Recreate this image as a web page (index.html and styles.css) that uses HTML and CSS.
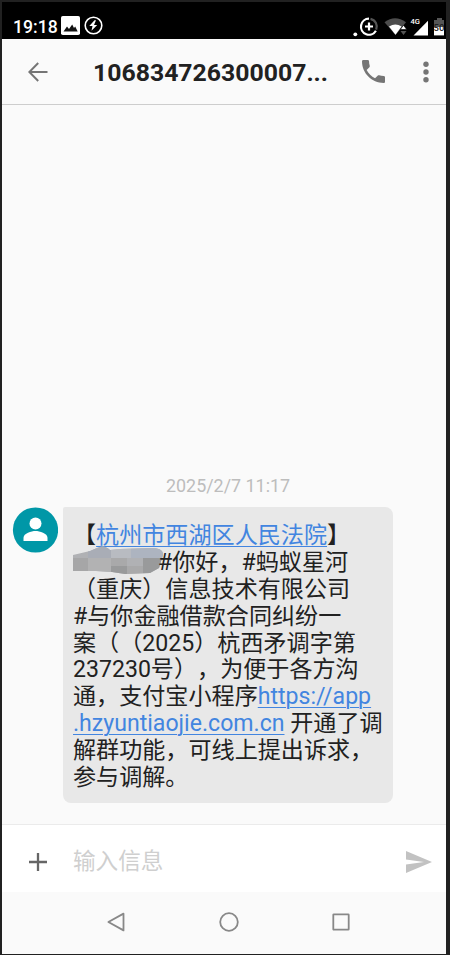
FILE: index.html
```html
<!DOCTYPE html>
<html lang="zh-CN">
<head>
<meta charset="utf-8">
<title>信息</title>
<link rel="stylesheet" href="styles.css">
</head>
<body>
<main class="phone">
  <div class="status">
    <span class="clock">19:18</span>
    <svg class="picture" width="19" height="19" viewBox="0 0 19 19"><rect width="19" height="19" rx="1.8" fill="#fff"/><path d="M2.5 15.5 6 10.5l2 2.5 3.2-4.5L13 12l1.2-1.5 2.5 5z" fill="#111"/></svg>
    <svg class="bolt" width="19" height="19" viewBox="0 0 19 19"><circle cx="9.5" cy="9.5" r="8.3" fill="none" stroke="#fff" stroke-width="1.6"/><path d="M10.5 4.2 5.3 10h3.2l-1 4.7L13.2 9H10l2-4.8z" fill="#fff"/></svg>
    <svg class="signals" width="91" height="22" viewBox="0 0 91 22">
      <circle cx="2.3" cy="18.3" r="1.9" fill="#fff"/>
      <path d="M16 2.7A8 8 0 1 0 22.9 14.7" fill="none" stroke="#fff" stroke-width="2.2"/>
      <path d="M17.5 2.8A8 8 0 0 1 23.2 13.7" fill="none" stroke="#555" stroke-width="2.2"/>
      <path d="M16 6.5v8M12 10.5h8" stroke="#fff" stroke-width="2.2"/>
      <path d="M31.5 6.3Q42 -1.8 53 6.3L42.5 19z" fill="#4c4c4c"/>
      <path d="M36 10.5Q42.5 6.5 48.5 10.5L42.5 18.8z" fill="#fff"/>
      <path d="m47.3 13.5 3.2-4.3 3.2 4.3z" fill="#fff" stroke="#000" stroke-width=".6"/><path d="m47.5 15 3 4 3-4z" fill="#555"/>
      <text x="57.5" y="7.5" class="network">4G</text>
      <path d="M60.5 19.4 75 4.8v14.6z" fill="#fff"/>
      <path d="M81 4h3V2h5v2h2v7.5H81z" fill="#555"/><path d="M81 11h10v8.4H81z" fill="#fff"/>
      <text x="80.5" y="14.8" class="charge">50</text>
    </svg>
  </div>
  <header class="header">
    <svg class="back" width="20" height="20" viewBox="0 0 20 20"><path d="M19.5 10H1.5M10.2 1 1.3 10l8.9 9" fill="none" stroke="#757575" stroke-width="2"/></svg>
    <h1 class="title">106834726300007...</h1>
    <svg class="call" width="23" height="23" viewBox="3 3 18 18"><path d="M6.62 10.79c1.44 2.83 3.76 5.14 6.59 6.59l2.2-2.2c.27-.27.67-.36 1.02-.24 1.12.37 2.33.57 3.57.57.55 0 1 .45 1 1V20c0 .55-.45 1-1 1-9.39 0-17-7.61-17-17 0-.55.45-1 1-1h3.5c.55 0 1 .45 1 1 0 1.25.2 2.45.57 3.57.11.35.03.74-.25 1.02z" fill="#757575"/></svg>
    <svg class="more" width="6" height="22" viewBox="0 0 6 22"><g fill="#757575"><circle cx="3" cy="3.3" r="2.7"/><circle cx="3" cy="11" r="2.7"/><circle cx="3" cy="18.7" r="2.7"/></g></svg>
  </header>
  <section class="thread">
    <time class="date">2025/2/7 11:17</time>
    <div class="message">
      <svg class="avatar" width="46" height="46" viewBox="0 0 46 46"><circle cx="23.5" cy="23" r="22.6" fill="#0097a7"/><circle cx="23.5" cy="16.4" r="6" fill="#fff"/><path d="M11.5 34v-3.2c0-4.5 8-6.8 12-6.8s12 2.3 12 6.8V34z" fill="#fff"/></svg>
      <div class="bubble">
        <p>【<a>杭州市西湖区人民法院</a>】</p>
        <p><svg class="redaction" width="90" height="28" viewBox="0 0 90 28">
          <clipPath id="smudge"><path d="M0 9 17 5 24 2Q31-2 37 4l10-1 31-1q13 0 12 7l-4 13-9 5-25 1-13-2-16-1H0z"/></clipPath>
          <g clip-path="url(#smudge)"><path fill="#b0b1b4" d="M0 0h90v28H0z"/><path fill="#a9adb6" d="M15 0h23v12H15z"/><path fill="#b8bbc1" d="M38 0h20v12H38z"/><path fill="#adb4c0" d="M58 0h32v12H58z"/><path fill="#a6a6a7" d="M0 12h15v16H0z"/><path fill="#b2b2b3" d="M15 12h23v16H15z"/><path fill="#a9a9aa" d="M38 12h16v8H38zM54 20h16v8H54z"/><path fill="#999a9b" d="M70 12h20v16H70zM38 20h16v8H38z"/></g>
        </svg>#你好，#蚂蚁星河</p>
        <p>（重庆）信息技术有限公司</p>
        <p>#与你金融借款合同纠纷一</p>
        <p>案（（2025）杭西矛调字第</p>
        <p>237230号），为便于各方沟</p>
        <p>通，支付宝小程序<a>https://app</a></p>
        <p><a>.hzyuntiaojie.com.cn</a> 开通了调</p>
        <p>解群功能，可线上提出诉求，</p>
        <p>参与调解。</p>
      </div>
    </div>
  </section>
  <div class="compose">
    <svg class="plus" width="18" height="18" viewBox="0 0 18 18"><path d="M9 0v18M0 9h18" stroke="#666" stroke-width="2.3"/></svg>
    <span class="hint">输入信息</span>
    <svg class="send" width="26" height="22" viewBox="0 0 26 22"><path d="M0 0 26 11 0 22v-8.4L18 11 0 8.4z" fill="#c2c2c2"/></svg>
  </div>
  <nav class="nav">
    <svg width="20" height="20" viewBox="0 0 20 20"><path d="M17.5 1.6v16.8L2.4 10z"/></svg>
    <svg width="20" height="20" viewBox="0 0 20 20"><circle cx="10" cy="10" r="8.8"/></svg>
    <svg width="20" height="20" viewBox="0 0 20 20"><rect x="2.3" y="2.3" width="15.4" height="15.4" rx=".5"/></svg>
  </nav>
</main>
</body>
</html>
```
FILE: styles.css
```css
* { box-sizing: border-box; }
body {
  margin: 0;
  padding: 2px 4px 1px 2px;
  height: 955px;
  background: #212121;
  font-family: Roboto, "Noto Sans CJK SC", sans-serif;
  color: #212121;
  overflow: hidden;
}
svg { display: block; flex: none; }
.phone {
  width: 444px;
  height: 952px;
  background: #fafafa;
  display: flex;
  flex-direction: column;
}
.status {
  height: 37px;
  flex: none;
  background: #000;
  color: #fff;
  display: flex;
  align-items: flex-start;
  padding: 14px 2px 0 11px;
}
.clock {
  width: 48px;
  font-size: 17.6px;
  font-weight: 500;
  line-height: 22px;
  white-space: nowrap;
}
.bolt { margin-left: 4px; }
.signals { margin-left: auto; }
.network { font-size: 7.5px; font-weight: 500; fill: #fff; }
.charge { font-size: 9.5px; font-weight: 500; fill: #222; }
.header {
  height: 66px;
  flex: none;
  border-bottom: 1px solid #cdcdcd;
  display: flex;
  align-items: center;
  padding: 0 17px 0 26px;
}
.title {
  margin: 2px 0 0 45px;
  width: 269px;
  font-size: 24.8px;
  line-height: 30px;
  font-weight: 700;
  white-space: nowrap;
}
.more { margin-left: auto; }
.thread {
  flex: 1;
  display: flex;
  flex-direction: column;
  justify-content: flex-end;
  padding: 0 53px 21px 10px;
}
.date {
  margin-left: 154px;
  font-size: 17.9px;
  line-height: 22px;
  margin-bottom: 10px;
  color: #bdbdbd;
  white-space: nowrap;
}
.message { display: flex; gap: 5px; }
.bubble {
  width: 330.5px;
  height: 296px;
  padding: 15px 0 0 10px;
  border-radius: 2px 8px 8px 8px;
  background: #e8e8e8;
  font-size: 23.1px;
  text-spacing-trim: space-all;
}
.bubble p {
  margin: 0;
  height: 26.9px;
  line-height: 27px;
  display: flex;
  white-space: pre;
}
.bubble a {
  color: #4285e0;
  text-decoration: underline;
  text-decoration-thickness: 1px;
  text-underline-offset: 3px;
}
.redaction { margin: -3px -5px 0 0; }
.compose {
  height: 68px;
  flex: none;
  background: #fff;
  border-top: 1px solid #ebebeb;
  display: flex;
  align-items: center;
  padding: 7px 14px 0 27px;
}
.hint {
  margin-left: 26px;
  font-size: 22.6px;
  line-height: 30px;
  color: #cfcfcf;
}
.send { margin-left: auto; }
.nav {
  height: 62px;
  flex: none;
  display: flex;
  gap: 92.5px;
  padding: 20px 0 0 104px;
  fill: none;
  stroke: #888;
  stroke-width: 1.8;
  stroke-linejoin: round;
}
```
